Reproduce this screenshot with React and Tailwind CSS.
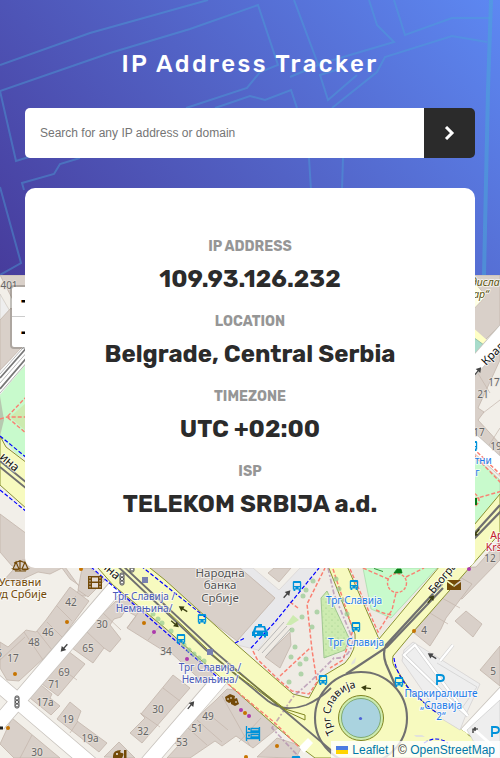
import React from "react";

const buildings = [
  "0,275 27,275 27,300 13,300",
  "0,320 11,308 27,328 27,342 0,370",
  "440,275 500,275 500,325 484,341 440,300",
  "440,395 470,378 500,345 500,360 478,408 484,412 478,420 500,444 500,468 478,449 440,420",
  "0,514 27,534 27,566 12,566 0,552",
  "4,580 22,560 60,560 86,596 76,596 80,586 70,579 62,568 50,574 38,572 25,578 20,584",
  "82,568 90,568 105,580 88,597 78,590",
  "0,642 8,647 26,630 36,632 46,620 70,587 89,601 62,638 45,657 19,681 7,680 0,668",
  "72,648 87,632 103,613 116,601 129,605 121,617 114,619 110,625 121,639 110,652 104,648 93,663 72,648",
  "64,648 85,664 58,696 42,684 54,670 50,666",
  "30,698 41,685 52,694 50,698 60,706 51,715",
  "57,719 70,702 81,711 77,721 107,743 99,752",
  "0,744 12,718 60,758 14,758",
  "104,757 119,742 135,758",
  "130,733 145,718 141,714 173,675 190,688 142,743",
  "116,605 121,600 126,594 136,601 143,594 148,590 175,615 224,671 207,686 166,648 164,651 127,628 136,616",
  "150,568 240,568 275,598 237,641 150,574",
  "216,700 227,689 235,690 278,728 253,748 236,736 222,746 215,741 190,758 167,758 178,746 172,740",
  "257,757 277,738 302,746 296,758",
  "268,573 279,582 291,568 274,568",
  "449,568 476,567 500,540 500,560 462,599 435,590",
  "430,613 458,576 472,584 446,618 441,629 430,646 413,632",
  "455,621 466,611 482,624 473,637",
  "480,670 500,646 500,686",
  "265,657 290,632 291,645 280,668",
];

const walls = [
  "M57,606L72,621 M47,622L62,637 M37,631L52,650 M24,632L43,660 M68,604L76,596 M0,660L25,637",
  "M86,631L104,648 M103,613L121,630 M66,672L77,680",
  "M78,721L70,733 M20,758L32,735 M127,628L143,606 M148,640L164,621 M140,713L160,727 M163,688L180,701",
  "M222,696L250,746 M205,711L228,730 M197,720L222,742 M188,728L207,745 M239,742L261,718",
  "M450,295L477,335 M462,300L440,330 M471,362L490,393 M450,401L472,421 M483,413L500,400 M484,453L500,428",
  "M430,613L448,624 M442,598L460,608",
];

const numbers = [
  [9, 289, "401"], [71, 606, "42"], [48, 636, "46"], [34, 646, "48"], [13, 662, "17"], [-1, 657, "6"],
  [102, 628, "30"], [88, 652, "65"], [64, 676, "69"], [54, 688, "71"], [45, 706, "17a"],
  [68, 723, "19"], [90, 742, "19a"], [37, 756, "30"], [158, 713, "30"], [143, 735, "32"],
  [166, 655, "34"], [208, 720, "49"], [197, 732, "51"], [182, 746, "53"], [424, 634, "4"],
  [493, 675, "5"], [490, 562, "12"], [494, 386, "17"], [483, 398, "21"], [479, 436, "17"], [496, 450, "19"],
];

const trees = [
  [303, 596], [306, 590], [313, 581], [317, 612], [302, 617], [312, 627], [292, 630], [295, 647],
  [291, 657], [306, 659], [300, 664], [301, 674], [289, 682], [336, 579], [339, 589], [343, 600], [347, 614],
  [153, 614], [158, 619], [162, 623], [171, 631], [184, 645], [189, 650], [194, 654], [199, 658], [204, 661],
];

const dots = [
  [81, 569, "#c77400"], [67, 622, "#c77400"], [15, 674, "#c77400"], [8, 728, "#c77400"],
  [144, 623, "#c77400"], [154, 632, "#ac39ac"], [187, 659, "#ac39ac"], [241, 710, "#ac39ac"],
  [245, 713, "#c77400"], [249, 716, "#ac39ac"], [277, 746, "#c77400"], [246, 757, "#c77400"],
  [414, 631, "#c77400"], [469, 569, "#ac39ac"],
];

function Label({ x, y, size = 11, color = "#555", children, rotate = 0, italic = false, halo = "#ffffff" }) {
  return (
    <text
      x={x}
      y={y}
      fontSize={size}
      fill={color}
      stroke={halo}
      strokeOpacity="0.65"
      strokeWidth="2"
      paintOrder="stroke"
      strokeLinejoin="round"
      textAnchor="middle"
      fontStyle={italic ? "italic" : "normal"}
      transform={`rotate(${rotate} ${x} ${y})`}
    >
      {children}
    </text>
  );
}

function Bus({ x, y }) {
  return (
    <g transform={`translate(${x - 4.5} ${y - 5})`} fill="#0092da">
      <path
        fillRule="evenodd"
        d="M1.5 0h6q1.2 0 1.2 1.3V8.5H8V10H6.2V8.5H2.8V10H1V8.5H.3V1.3Q.3 0 1.5 0M1.6 2v3h5.8V2zM1.6 6.2v1.2h1.4V6.2zM6 6.2v1.2h1.4V6.2z"
      />
    </g>
  );
}

function Signal({ x, y }) {
  return (
    <g transform={`translate(${x} ${y})`} fill="#fff" stroke="#545454" strokeWidth="1">
      <rect x="-2" y="-6" width="4" height="12" rx="1.5" />
      <circle cy="-3.5" r="1.6" />
      <circle r="1.6" />
      <circle cy="3.5" r="1.6" />
    </g>
  );
}

function Arrow({ x, y, r, color = "#444" }) {
  return (
    <g transform={`translate(${x} ${y}) rotate(${r})`}>
      <path d="M-5 0H3" stroke={color} strokeWidth="1.3" />
      <path d="M5 0L0-3V3z" fill={color} />
    </g>
  );
}

function StreetMap() {
  return (
    <svg className="block h-full w-full font-['Noto_Sans','Open_Sans',sans-serif]" viewBox="0 275 500 483" aria-hidden="true">
      <defs>
        <pattern id="grove" width="6" height="6" patternUnits="userSpaceOnUse">
          <rect width="6" height="6" fill="#cdebb0" />
          <circle cx="2" cy="2" r=".6" fill="#8fc480" />
          <circle cx="5" cy="5" r=".4" fill="#8fc480" />
        </pattern>
        <path id="square-ring" d="M334.500 733A30 30 0 0 1 368 688.500" />
      </defs>
      <rect y="275" width="500" height="483" fill="#f2efe9" />

      <path d="M0 294L11 313V402L0 416z" fill="#eeeeee" stroke="#c9c2bb" strokeWidth=".6" />
      <path d="M240 568H253L279 590L300 568H322L258 650L237 645V641L275 598z" fill="#e8e8ea" stroke="#d3cfcd" strokeWidth=".6" />
      <path d="M258 650L318 568H330L349 612L355 634L350 660L330 672L309 694L290 691L259 661z" fill="#efebe5" />

      <g fill="#d9d0c9" stroke="#c3b5ab" strokeWidth=".8">
        {buildings.map((points, i) => <polygon key={i} points={points} />)}
      </g>
      <g fill="none" stroke="#c3b5ab" strokeWidth=".7">
        {walls.map((d, i) => <path key={i} d={d} />)}
      </g>
      <path d="M440 285L475 283L486 296L471 312L440 288z" fill="#ffffe5" stroke="#c3b5ab" strokeWidth=".7" />
      <path d="M470 325L488 341L472 363z" fill="#ffffc5" />
      <path d="M473 337L484 345L473 356z" fill="#a8dccb" stroke="#7dae9e" strokeWidth=".7" />

      <g fill="none" stroke="#c8c3bd" strokeLinecap="butt" strokeLinejoin="round">
        <path d="M118 584L17 702L-2 724M17 700L-10 677M17 701L92 765M220 679L145 766M460 382L510 325M460 430L510 475" strokeWidth="16" />
        <path d="M515 683L457 745" strokeWidth="17" />
      </g>
      <g fill="none" stroke="#ffffff" strokeLinecap="butt" strokeLinejoin="round">
        <path d="M120 582L17 702L-2 724M17 700L-10 677M17 701L92 765M222 677L145 766M460 382L510 325M460 430L510 475" strokeWidth="14.5" />
        <path d="M517 681L455 747" strokeWidth="15.5" />
      </g>

      <path d="M0 372L27 342V362L0 394z" fill="#fff" />
      <path d="M0 395L27 363V458L17 455L0 436z" fill="#c8facc" />
      <path d="M0 396L4 420L0 436z" fill="#b7c9b0" />
      <path d="M10 417L27 402V432z" fill="#cdebb0" />
      <path d="M27 396L7 417L27 434M0 419L7 417H27" fill="none" stroke="#fa8072" strokeWidth="1.4" strokeDasharray="4 2" />
      <path d="M0 378L29 345M0 389L29 355" stroke="#777" strokeWidth="1.8" />
      <path d="M0 383L29 350M0 393L29 360M0 374L29 341" stroke="#999" strokeWidth=".7" />

      <path d="M473 455L500 480V495L472 527z" fill="#c8facc" stroke="#a5cda5" strokeWidth=".6" />
      <path d="M473 448L502 476M473 454L502 484M474 499L502 491M474 493Q484 500 474 507" fill="none" stroke="#fa8072" strokeWidth="1.5" strokeDasharray="4 2" />
      <path d="M474 498h3v7h-3z" fill="#087a18" />

      <path
        d="M0 436L6 447L27 463L150 568L165 580L237 645L278 681L293 694L309 698L320 678L345 663Q357 650 355 634L328 566H347L379 639L500 494V533L413 632L393 656Q391 664 397 670L410 690L430 708L457 727L480 743L500 758H315L299 746L272 723L228 684L165 628L113 585L98 568L27 509L0 485z"
        fill="#f7fabf"
        stroke="#8a9231"
        strokeWidth="1"
      />
      <path d="M457 727L468 734L455 748" fill="#f7fabf" />

      <path d="M350 568H437L380 636z" fill="#ede9e2" />
      <path d="M363 568H437L391 618L371 609z" fill="#c8facc" stroke="#9bd5a0" strokeWidth=".6" />
      <circle cx="397" cy="583" r="9.5" fill="#c8facc" stroke="#fa8072" strokeWidth="1.4" strokeDasharray="3 1.5" />
      <path d="M350 569L378 632L392 610L396 593M363 568L388 579M406 577L424 568M376 610Q384 614 393 615" fill="none" stroke="#fa8072" strokeWidth="1.4" strokeDasharray="4 2" />
      <path d="M394 573l3-4h4l1 4zM374 568.500l9 3" fill="#087a18" stroke="#087a18" strokeWidth=".8" />

      <path d="M321 598L327 591L349 638L345 650L324 658z" fill="url(#grove)" stroke="#8fbd82" strokeWidth=".8" />
      <path d="M286 625L293 615L299 620L291 625z" fill="#cdebb0" />
      <path d="M258 651L284 622M266 656L291 628M262 653L287 626" stroke="#aaa" strokeWidth=".8" />
      <path d="M253 651L257 659L280 681L292 691L309 694L317 682L312 650L307 604L325 568M333 569L353 630L343 660L330 668M280 676L310 648M290 602L298 608" fill="none" stroke="#fa8072" strokeWidth="1.5" strokeDasharray="4 2" />
      <path d="M328 568L334 594L353 640Q350 660 334 658L311 681L293 697L272 728L300 758" fill="none" stroke="#a982a8" strokeOpacity=".65" strokeWidth="1.7" strokeDasharray="5 2 2 2" />
      <path d="M228 684L275 723L300 748" fill="none" stroke="#fa8072" strokeWidth="1.4" strokeDasharray="4 2" />

      <g fill="none" stroke="#0000ff" strokeWidth="1.2" strokeDasharray="4 2">
        <path d="M0 436L27 458M0 490L27 512M91 567L170 636L222 681M141 566L205 617M235 643L245 638M251 648L275 622L319 568M394 658Q396 674 410 690L430 708L457 727M424 743Q436 735 448 743" />
      </g>

      <g fill="none" stroke="#707070">
        <path d="M0 461L27 483M0 467L27 489M110 559L206 650L268 701Q284 713 306 705M121 564L214 651L280 707L332 751M306 705Q320 699 331 688" strokeWidth="1.8" />
        <path d="M472 536L500 505M442 584L386 645Q382 653 386 664L396 687M472 541L502 510M443 588L387 647L346 674" strokeWidth="2.2" />
        <circle cx="361" cy="718" r="46" strokeWidth="2.1" />
      </g>
      <path d="M167 611L227 668L288 712L305 720V715L285 709L227 664" fill="none" stroke="#7f8520" strokeWidth="1" />

      <circle cx="361" cy="718" r="22.500" fill="#cdebb0" stroke="#7f8520" strokeWidth="1" />
      <circle cx="361" cy="718" r="19.500" fill="#aad3df" stroke="#6f9c5b" strokeWidth=".8" />
      <circle cx="360.500" cy="718.500" r="1.600" fill="#4e62d8" />
      <path d="M299 747L308 738L313 743L304 753z" fill="#fff" />
      <path d="M352 662l4-5-1 6-4 2zM414 735h8l3 2h-9z" fill="#e2e2dc" />

      <path d="M404 650L413 642L480 684L467 712L460 730L442 719L402 661z" fill="#eeeeee" stroke="#d1cfcf" strokeWidth=".7" />
      <path d="M440 661L453 645M467 715L415 645L404 655L447 697L468 716" fill="none" stroke="#cfcfcf" strokeWidth="3.500" />
      <path d="M440 661L453 645M467 715L415 645L404 655L447 697L468 716" fill="none" stroke="#fff" strokeWidth="2.300" />
      <path d="M437 663L477 687L462 708" fill="none" stroke="#cfcfcf" strokeWidth=".7" />
      <path d="M467 730L500 700V758H483z" fill="#eeeeee" stroke="#ccc" strokeWidth=".7" />
      <path d="M476 731L494 747" stroke="#fff" strokeWidth="3" />

      <g fill="#96ca91" opacity=".7">
        {trees.map(([x, y], i) => <circle key={i} cx={x} cy={y} r="2.500" />)}
      </g>
      {dots.map(([x, y, fill], i) => <circle key={i} cx={x} cy={y} r="2" fill={fill} />)}

      {numbers.map(([x, y, n], i) => <Label key={i} x={x} y={y} size={10} color="#666" halo="#e8e2dc">{n}</Label>)}

      <Label x={7} y={465} size={12} rotate={41} color="#111">ина</Label>
      <Label x={108} y={573} size={12} rotate={41} color="#111">ина</Label>
      <Label x={453} y={571} size={11} rotate={-50} color="#111">Београдска</Label>
      <Label x={499} y={353} size={11.5} rotate={-45} color="#111">Краља</Label>
      <text fontSize="10.500" fill="#111" stroke="#fff" strokeOpacity=".6" strokeWidth="1.500" paintOrder="stroke">
        <textPath href="#square-ring">Трг Славија</textPath>
      </text>

      <Label x={20} y={586} color="#734a08">Уставни</Label>
      <Label x={18} y={598} color="#734a08">Суд Србије</Label>
      <Label x={220} y={577} size={11.5}>Народна</Label>
      <Label x={220} y={589} size={11.5}>банка</Label>
      <Label x={220} y={602} size={11.5}>Србије</Label>
      <Label x={144} y={600} size={10} color="#4a5bb8">Трг Славија /</Label>
      <Label x={144} y={612} size={10} color="#4a5bb8">Немањина/</Label>
      <Label x={210} y={671} size={10} color="#4a5bb8">Трг Славија /</Label>
      <Label x={210} y={683} size={10} color="#4a5bb8">Немањина/</Label>
      <Label x={354} y={604} size={10} color="#1d7bea">Трг Славија</Label>
      <Label x={356} y={646} size={10} color="#1d7bea">Трг Славија</Label>
      <Label x={441} y={697} size={10} color="#1d7bea">Паркиралиште</Label>
      <Label x={441} y={709} size={10} color="#1d7bea">„Славија</Label>
      <Label x={441} y={720} size={10} color="#1d7bea">2“</Label>
      <Label x={474} y={464} size={10} color="#1d7bea">Цветни</Label>
      <Label x={472} y={476} size={10} color="#1d7bea">трг</Label>
      <Label x={479} y={286} size={10.5} italic color="#5d5510">Владислав</Label>
      <Label x={478} y={298} size={10.5} italic color="#5d5510">Бар“</Label>
      <Label x={502} y={539} size={10.5} color="#c41c30">Apar</Label>
      <Label x={497} y={551} size={10.5} color="#c41c30">Kršn</Label>

      {[[202, 619], [181, 639], [297, 586], [323, 680], [354, 585], [356, 627], [399, 682], [473, 446], [296, 761]].map(([x, y], i) => <Bus key={i} x={x} y={y} />)}
      <rect x="142" y="577" width="6" height="6" fill="#7981b0" />
      <rect x="207" y="649" width="6" height="6" fill="#7981b0" />
      <Signal x={122} y={579} />
      <Signal x={17} y={702} />
      <Signal x={132} y={566} />

      <Arrow x={64} y={648} r={132} />
      <Arrow x={191} y={705} r={-50} />
      <Arrow x={287} y={594} r={-48} />
      <Arrow x={478} y={371} r={-50} />
      <Arrow x={183} y={609} r={212} color="#3b3f10" />
      <Arrow x={175} y={624} r={40} color="#3b3f10" />
      <Arrow x={431} y={599} r={-50} color="#3b3f10" />
      <Arrow x={476} y={533} r={132} color="#3b3f10" />
      <Arrow x={366} y={688} r={188} color="#3b3f10" />
      <Arrow x={432} y={656} r={212} />
      <path d="M473 733V729H478M475 727v4" stroke="#222" strokeWidth="1.200" fill="none" />
      <path d="M0 728h3" stroke="#222" strokeWidth="3" />

      <g fill="none" stroke="#734a08" strokeWidth="1.2">
        <path d="M20 560V571M15 571H26M14 563L20 561L26 563M13 569L16 562L19 569M22 569L25 562L28 569" />
        <path d="M13 569q3 2 6 0zM22 569q3 2 6 0z" fill="#734a08" />
      </g>
      <g>
        <rect x="88" y="576" width="14" height="13" fill="#734a08" />
        <path d="M92 577.500h6v4h-6zM92 583h6v4.500h-6z" fill="#e5ddd5" />
        <path d="M90 577V589M100 577V589" stroke="#e5ddd5" strokeDasharray="1.500 1.500" />
      </g>
      <g fill="#734a08">
        <path d="M113 756q0-6 8-6q-2 3 1 3t0 5h-9zM124 750h2.500v9H124z" />
        <circle cx="117" cy="754" r=".9" fill="#fff" />
        <path d="M225 697l5-3 5 2-1 5-5 2-3-2zM231 700l6-2 2 6-4 2-4-2z" />
        <circle cx="228" cy="699" r=".8" fill="#fff" /><circle cx="231" cy="698" r=".8" fill="#fff" /><circle cx="236" cy="702" r=".8" fill="#fff" />
        <path d="M447 580l7 5 7-5zM447 582l7 5 7-5v8h-14z" />
      </g>
      <g transform="translate(253 624)" fill="#0092da">
        <path fillRule="evenodd" d="M5 0h4v2h3l2 5 1 1v4h-2v1.500h-2V12H3v1.500H1V12H-1V8L0 7 2 2h3zM3.500 3.500L2.500 6.500h9L10.500 3.500zM2 8.500v1.500h2V8.500zM10 8.500v1.500h2V8.500z" />
      </g>
      <g fill="none" stroke="#0092da" strokeWidth="1.3">
        <path d="M246.500 726V741M259.500 727V741M247 732.500H259M247 738.500H259M251 728.500H259V731H251zM251 734.500H259V737H251z" />
        <path d="M248 729h2M248 735.500h2" strokeWidth="2" />
      </g>
      <g fill="none" stroke="#0092da" strokeWidth="1.800">
        <path d="M437 685V675H440.500Q444 675 444 678Q444 681 440.500 681H437M492 737V727H495.500Q499 727 499 730Q499 733 495.500 733H492" />
      </g>
    </svg>
  );
}

function HeaderPattern() {
  return (
    <svg className="absolute inset-0 h-full w-full" viewBox="0 0 500 275" fill="none" stroke="#4aa5d8" strokeWidth="2" aria-hidden="true">
      <g opacity=".42">
        <path d="M0 65L90 33L208 0" />
        <path d="M0 91L110 53L190 29L258 5L278 65L260 72L247 88L186 108M0 91L16 161L55 149" />
        <path d="M294 0L318 64M369 0L377 25L394 42L323 63L290 77" />
        <path d="M394 0L405 35L452 18H490M487 42L452 36L385 57L377 72L332 108" />
        <path d="M345 67L320 75L328 100L357 75" />
        <path d="M215 108L250 96L265 100L291 90L297 108M309 158L311 190M343 158L342 190" />
        <path d="M80 158L60 164L54 174L22 183L24 190M0 187L21 263L0 275" />
      </g>
      <path d="M491 0L488 90L484 275" strokeWidth="4" opacity=".55" />
    </svg>
  );
}

function Stat({ label, value }) {
  return (
    <div className="flex flex-col items-center whitespace-nowrap">
      <dt className="text-sm leading-5 font-bold text-[#969696]">{label}</dt>
      <dd className="mt-[6px] text-2xl leading-8 font-bold text-[#2b2b2b]">{value}</dd>
    </div>
  );
}

export default function App() {
  return (
    <div className="h-[758px] w-[500px] overflow-hidden bg-white font-['Rubik','Roboto',sans-serif]">
      <header className="relative z-10 h-[275px] bg-[linear-gradient(50deg,#473c9c_0%,#5262c5_50%,#5d88f2_100%)] px-[25px] pt-12">
        <HeaderPattern />
        <h1 className="relative text-center text-2xl leading-8 font-medium tracking-[2.4px] text-white">IP Address Tracker</h1>
        <form className="relative mt-7 flex h-[50px] overflow-hidden rounded-[5px]" onSubmit={(e) => e.preventDefault()}>
          <input
            className="min-w-0 flex-1 bg-white px-[15px] font-['Liberation_Sans',sans-serif] text-xs outline-none placeholder:text-[#757575]"
            placeholder="Search for any IP address or domain"
          />
          <button aria-label="Search" className="flex w-[51px] items-center justify-center bg-[#2b2b2b]">
            <svg width="11" height="14" viewBox="0 0 11 14" fill="none">
              <path d="M2 1L8 7L2 13" stroke="#fff" strokeWidth="3" />
            </svg>
          </button>
        </form>
        <dl className="relative mt-[30px] flex h-[380px] flex-col items-center gap-[17px] rounded-[10px] bg-white pt-[49px]">
          <Stat label="IP ADDRESS" value="109.93.126.232" />
          <Stat label="LOCATION" value="Belgrade, Central Serbia" />
          <Stat label="TIMEZONE" value="UTC +02:00" />
          <Stat label="ISP" value="TELEKOM SRBIJA a.d." />
        </dl>
      </header>
      <main className="relative h-[483px] overflow-hidden">
        <StreetMap />
        <div className="absolute top-[10px] left-[10px] flex w-[34px] flex-col rounded-sm border-2 border-black/20 bg-white bg-clip-padding text-center font-['Liberation_Sans',sans-serif] text-[22px] leading-[29px] font-bold text-black">
          <button className="h-[30px] border-b border-[#ccc]">+</button>
          <button className="h-[30px]">−</button>
        </div>
        <div className="absolute right-0 bottom-0 flex h-[17px] items-center bg-white/80 px-[5px] font-['Liberation_Sans',sans-serif] text-xs whitespace-pre text-[#333]">
          <svg className="mr-1" width="12" height="8" viewBox="0 0 12 8">
            <path fill="#4C7BE1" d="M0 0h12v4H0z" />
            <path fill="#FFD500" d="M0 4h12v4H0z" />
          </svg>
          <a className="text-[#0078a8]">Leaflet</a> | © <a className="text-[#0078a8]">OpenStreetMap</a>
        </div>
      </main>
    </div>
  );
}
